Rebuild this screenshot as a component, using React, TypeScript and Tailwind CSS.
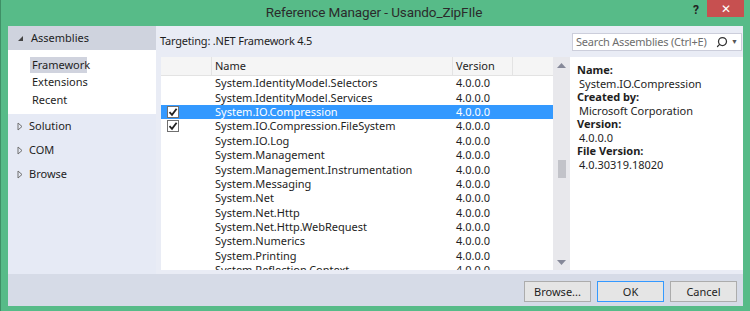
import { Search } from "lucide-react";

const rows = [
  { name: "System.IdentityModel.Selectors", checked: false },
  { name: "System.IdentityModel.Services", checked: false },
  { name: "System.IO.Compression", checked: true, selected: true },
  { name: "System.IO.Compression.FileSystem", checked: true },
  { name: "System.IO.Log", checked: false },
  { name: "System.Management", checked: false },
  { name: "System.Management.Instrumentation", checked: false },
  { name: "System.Messaging", checked: false },
  { name: "System.Net", checked: false },
  { name: "System.Net.Http", checked: false },
  { name: "System.Net.Http.WebRequest", checked: false },
  { name: "System.Numerics", checked: false },
  { name: "System.Printing", checked: false },
  { name: "System.Reflection.Context", checked: false },
];

const details = [
  { label: "Name:", value: "System.IO.Compression" },
  { label: "Created by:", value: "Microsoft Corporation" },
  { label: "Version:", value: "4.0.0.0" },
  { label: "File Version:", value: "4.0.30319.18020" },
];

function Check() {
  return (
    <div className="w-[12px] h-[12px] border border-[#707070] bg-white flex items-center justify-center">
      <svg width="10" height="10" viewBox="0 0 10 10">
        <path d="M1.5 5.2 L4 7.8 L8.6 1.8" fill="none" stroke="#222" strokeWidth="1.8" />
      </svg>
    </div>
  );
}

function Expander({ open }: { open?: boolean }) {
  return open ? (
    <svg width="7" height="7" viewBox="0 0 7 7" className="shrink-0">
      <path d="M6 1 L6 6 L1 6 Z" fill="#444" />
    </svg>
  ) : (
    <svg width="6" height="9" viewBox="0 0 6 9" className="shrink-0">
      <path d="M1 1 L5 4.5 L1 8 Z" fill="none" stroke="#707070" strokeWidth="1" />
    </svg>
  );
}

function Button({ label, primary }: { label: string; primary?: boolean }) {
  return (
    <div
      className={`w-[67px] h-[21px] flex items-center justify-center bg-[#e5e5e5] border ${
        primary ? "border-[#3399ff]" : "border-[#acacac]"
      } text-[#1e1e1e]`}
    >
      {label}
    </div>
  );
}

export default function App() {
  return (
    <div
      className="w-[750px] h-[311px] bg-[#57bb88] border-l border-[#3f8f66] flex flex-col overflow-hidden"
      style={{ fontFamily: '"Noto Sans", "Open Sans", sans-serif' }}
    >
      {/* title bar */}
      <div className="h-[26px] shrink-0 flex items-start font-[Roboto,sans-serif]">
        <div className="flex-1 text-center text-[13.5px] leading-[18px] tracking-[-0.1px] text-[#2b2b2b] pt-[3px] pl-[54px]">
          Reference Manager - Usando_ZipFIle
        </div>
        <div className="w-[14px] text-[12px] leading-[16px] font-bold text-[#222] pt-[2px]">?</div>
        <div className="w-[37px] h-[17px] bg-[#c75050] flex items-center justify-center text-white text-[12px] mr-[6px]">
          ✕
        </div>
      </div>

      {/* content */}
      <div className="mx-[7px] h-[280px] flex flex-col bg-[#e9ecf5] text-[11px] leading-[14px] text-[#1e1e1e]">
        <div className="flex h-[248px]">
          {/* left nav */}
          <div className="w-[148px] bg-[#e6eaf5] flex flex-col">
            <div className="h-[24px] bg-[#cfd3de] flex items-center gap-[7px] pl-[9px]">
              <Expander open />
              <span>Assemblies</span>
            </div>
            <div className="bg-white h-[64px] pt-[7px] pl-[22px] flex flex-col">
              <div className="h-[16px] w-[57px] bg-[#d0d3de] flex items-center pl-[2px]">Framework</div>
              <div className="h-[18px] flex items-center pl-[2px]">Extensions</div>
              <div className="h-[17px] flex items-center pl-[2px]">Recent</div>
            </div>
            <div className="flex flex-col">
              {["Solution", "COM", "Browse"].map((t) => (
                <div key={t} className="h-[24px] flex items-center gap-[6px] pl-[9px]">
                  <Expander />
                  <span>{t}</span>
                </div>
              ))}
            </div>
          </div>

          {/* main */}
          <div className="flex-1 flex flex-col">
            <div className="h-[31px] flex items-center justify-between pl-[4px] pr-[1px]">
              <span className="pb-[1px] tracking-[-0.2px]">Targeting: .NET Framework 4.5</span>
              <div className="w-[170px] h-[18px] bg-white border border-[#cccedb] flex items-center justify-between pl-[3px] pr-[3px]">
                <span className="text-[#6d6d6d] whitespace-nowrap tracking-[-0.2px]">Search Assemblies (Ctrl+E)</span>
                <div className="flex items-center gap-[3px]">
                  <Search size={12} strokeWidth={2.5} className="text-[#333] -scale-x-100" />
                  <span className="text-[7px] leading-[8px] text-[#555]">▼</span>
                </div>
              </div>
            </div>

            <div className="flex h-[213px] ml-[5px]">
              {/* list */}
              <div className="w-[392px] bg-white flex flex-col overflow-hidden">
                <div className="h-[19px] shrink-0 flex bg-[#f5f5f5] border-b border-[#e3e3e3]">
                  <div className="w-[51px] border-r border-[#e3e3e3]" />
                  <div className="w-[241px] border-r border-[#e3e3e3] pl-[3px] flex items-center">Name</div>
                  <div className="w-[60px] border-r border-[#e3e3e3] pl-[3px] flex items-center">Version</div>
                  <div className="flex-1" />
                </div>
                {rows.map((r) => (
                  <div
                    key={r.name}
                    className={`h-[14.4px] shrink-0 flex items-center ${
                      r.selected ? "bg-[#3399ff] text-white" : ""
                    }`}
                  >
                    <div className="w-[51px] pl-[6px] flex items-center">{r.checked && <Check />}</div>
                    <div className="w-[241px] pl-[3px] whitespace-nowrap overflow-hidden">{r.name}</div>
                    <div className="w-[60px] pl-[3px]">4.0.0.0</div>
                  </div>
                ))}
              </div>

              {/* scrollbar */}
              <div className="w-[17px] bg-[#e8e8ec] flex flex-col items-center">
                <div className="h-[14px] flex items-center justify-center mt-[1px]">
                  <svg width="9" height="5" viewBox="0 0 9 5">
                    <path d="M0 5 L4.5 0 L9 5 Z" fill="#868999" />
                  </svg>
                </div>
                <div className="mt-[88px] w-[8px] h-[18px] bg-[#c2c3c9]" />
                <div className="flex-1" />
                <div className="h-[14px] flex items-center justify-center mb-[1px]">
                  <svg width="9" height="5" viewBox="0 0 9 5">
                    <path d="M0 0 L4.5 5 L9 0 Z" fill="#868999" />
                  </svg>
                </div>
              </div>

              {/* details */}
              <div className="flex-1 bg-white pl-[7px] pt-[6px] leading-[13.5px]">
                {details.map((d) => (
                  <div key={d.label}>
                    <div className="font-bold">{d.label}</div>
                    <div className="pl-[2px]">{d.value}</div>
                  </div>
                ))}
              </div>
            </div>
          </div>
        </div>

        {/* bottom bar */}
        <div className="flex-1 bg-[#d6dbe7] flex items-start justify-end gap-[6px] pr-[6px] pt-[7px]">
          <Button label="Browse..." />
          <Button label="OK" primary />
          <Button label="Cancel" />
        </div>
      </div>
    </div>
  );
}
